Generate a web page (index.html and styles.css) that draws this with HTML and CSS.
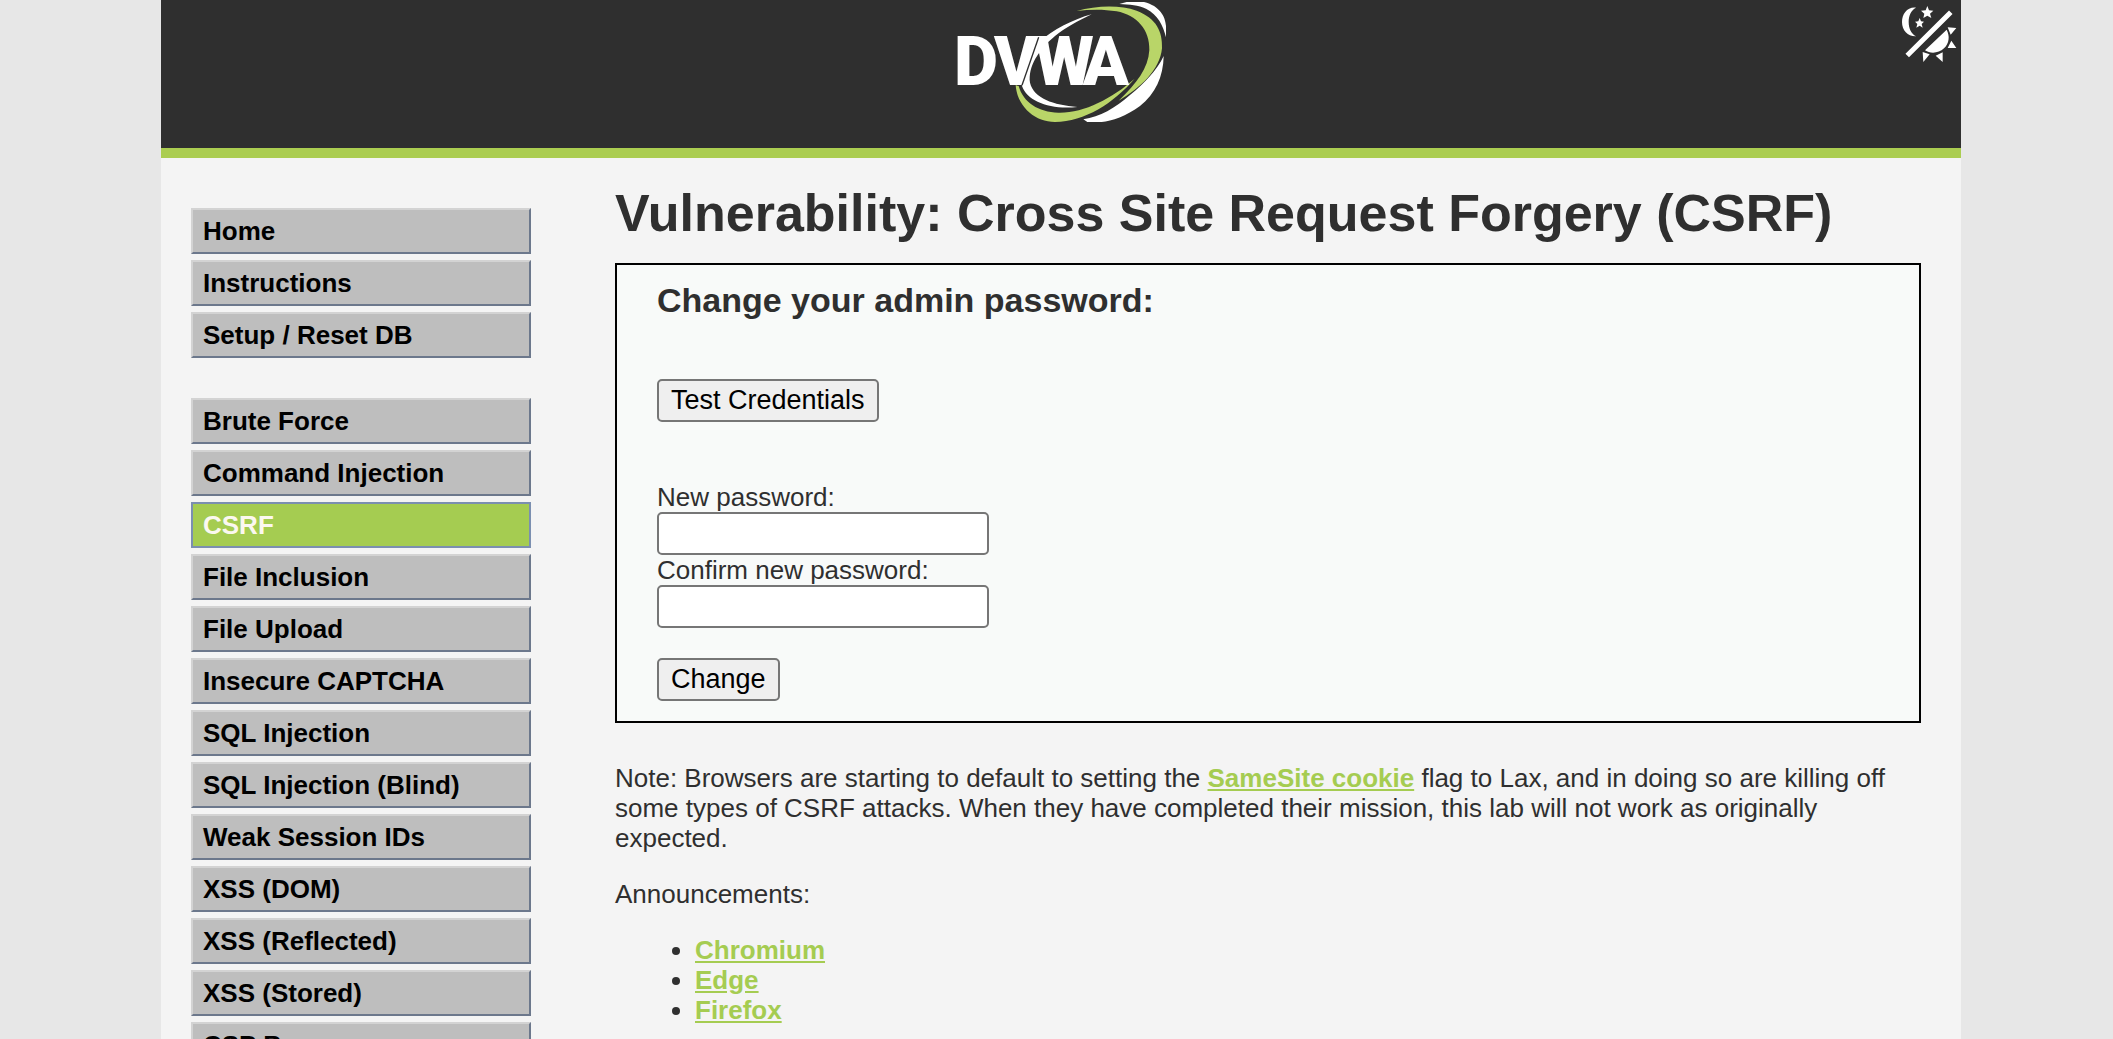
FILE: index.html
```html
<!DOCTYPE html>
<html lang="en">
<head>
    <meta charset="UTF-8">
    <meta name="viewport" content="width=device-width, initial-scale=1.0">
    <title>Vulnerability: Cross Site Request Forgery (CSRF)</title>
    <link rel="stylesheet" href="styles.css">
</head>
<body>
    <div class="container">
        <header class="header">
            <svg class="logo" viewBox="78 6 630 360" role="img" aria-label="DVWA">
                <g fill="#fff">
                    <path d="M568 12 L590 6 L642 6 C690 18 706 50 708 78 L708 112 C700 78 684 44 648 26 C625 16 600 13 568 12Z"/>
                    <path d="M701 168 C700 230 676 282 630 318 C590 348 545 364 515 366 L472 366 L460 358 C510 350 555 325 600 285 C645 248 680 212 701 168Z"/>
                    <path d="M485 43 C430 58 370 88 325 128 C290 162 268 212 276 258 C292 304 360 330 442 321 C370 314 312 296 300 248 C294 200 325 150 375 108 C405 84 445 62 485 43Z"/>
                </g>
                <g fill="#b9d568">
                    <path d="M440 33 C500 16 570 14 620 32 C680 55 698 95 696 145 C690 210 630 265 566 302 C620 250 655 205 658 150 C660 90 620 45 560 34 C520 27 480 28 440 33Z"/>
                    <path d="M257 256 C262 320 315 366 375 366 C465 364 550 310 614 236 C545 296 460 340 385 338 C325 336 280 308 266 258Z"/>
                </g>
                <text class="logo-text" x="72 192 314 458" y="256">DVWA</text>
                <path d="M326 112 L276 256" stroke="#2f2f2f" stroke-width="4"/>
            </svg>
            <button class="theme-button" type="button" aria-label="Toggle theme">
                <svg class="theme-icon" viewBox="93 3 180 186" fill="#fff">
                    <path d="M138 23 C112 20 96 42 96 66 C96 92 114 110 138 109 C123 101 116 84 116 66 C116 47 123 31 138 23Z"/>
                    <path d="M172 18 L177 31 L190 32 L180 41 L184 54 L172 47 L160 54 L163 41 L153 32 L167 31Z"/>
                    <path d="M149 54 L153 64 L162 65 L155 72 L158 83 L149 77 L139 83 L142 72 L135 65 L145 64Z"/>
                    <path d="M117 161 L237 42" stroke="#fff" stroke-width="15" stroke-linecap="square"/>
                    <path d="M230 89 C240 108 238 130 222 145 C206 160 182 162 165 151Z"/>
                    <path d="M233 82 L259 84 L242 104Z M244 122 L259 144 L233 144Z M158 156 L179 163 L160 186Z M218 157 L218 186 L197 167Z"/>
                </svg>
            </button>
        </header>

        <div class="page">
            <nav class="menu">
                <ul class="menu-block">
                    <li><a href="#">Home</a></li>
                    <li><a href="#">Instructions</a></li>
                    <li><a href="#">Setup / Reset DB</a></li>
                </ul>
                <ul class="menu-block">
                    <li><a href="#">Brute Force</a></li>
                    <li><a href="#">Command Injection</a></li>
                    <li><a class="selected" href="#">CSRF</a></li>
                    <li><a href="#">File Inclusion</a></li>
                    <li><a href="#">File Upload</a></li>
                    <li><a href="#">Insecure CAPTCHA</a></li>
                    <li><a href="#">SQL Injection</a></li>
                    <li><a href="#">SQL Injection (Blind)</a></li>
                    <li><a href="#">Weak Session IDs</a></li>
                    <li><a href="#">XSS (DOM)</a></li>
                    <li><a href="#">XSS (Reflected)</a></li>
                    <li><a href="#">XSS (Stored)</a></li>
                    <li><a href="#">CSP Bypass</a></li>
                </ul>
            </nav>

            <main class="content">
                <h1>Vulnerability: Cross Site Request Forgery (CSRF)</h1>

                <div class="vulnerable-area">
                    <h3>Change your admin password:</h3>
                    <button class="button" type="button">Test Credentials</button>
                    <form class="password-form">
                        <label for="password_new">New password:</label>
                        <input type="password" id="password_new" name="password_new" autocomplete="off">
                        <label for="password_conf">Confirm new password:</label>
                        <input type="password" id="password_conf" name="password_conf" autocomplete="off">
                        <button class="button change" type="submit">Change</button>
                    </form>
                </div>

                <p>Note: Browsers are starting to default to setting the <a href="#">SameSite cookie</a> flag to Lax, and in doing so are killing off some types of CSRF attacks. When they have completed their mission, this lab will not work as originally expected.</p>
                <p>Announcements:</p>
                <ul class="links">
                    <li><a href="#">Chromium</a></li>
                    <li><a href="#">Edge</a></li>
                    <li><a href="#">Firefox</a></li>
                </ul>
            </main>
        </div>
    </div>
</body>
</html>
```
FILE: styles.css
```css
body {
    margin: 0;
    padding-left: 9px;
    background-color: #e7e7e7;
    color: #2f2f2f;
    font: 26px/30px Arial, "Liberation Sans", sans-serif;
}
.container {
    max-width: 1800px;
    min-height: 100vh;
    margin: 0 auto;
    background-color: #f4f4f4;
}

/* header */
.header {
    display: grid;
    grid-template-columns: 1fr auto 1fr;
    align-items: start;
    padding-bottom: 26px;
    background-color: #2f2f2f;
    border-bottom: 10px solid #abcd51;
}
.logo {
    grid-column: 2;
    display: block;
    width: 210px;
    height: 120px;
    margin-top: 2px;
}
.logo-text {
    font-family: Roboto, sans-serif;
    font-size: 204px;
    font-weight: 900;
    fill: #fff;
}
.theme-button {
    justify-self: end;
    margin-top: 1px;
    padding: 0;
    border: 0;
    background: none;
}
.theme-icon {
    display: block;
    width: 60px;
    height: 62px;
}

/* columns */
.page {
    display: flex;
    gap: 84px;
    padding: 0 40px 0 30px;
}
.menu {
    flex: 0 0 340px;
    padding-top: 50px;
}
.menu-block {
    display: flex;
    flex-direction: column;
    gap: 6px;
    margin: 0 0 40px;
    padding: 0;
    list-style: none;
}
.menu-block a {
    display: block;
    padding: 6px 10px;
    border: 2px solid;
    border-color: #d3d3d3 #6c788c #6c788c #d3d3d3;
    background-color: #bebebe;
    color: #000;
    font-weight: bold;
    text-decoration: none;
}
.menu-block a.selected {
    border-color: #7b8fb0;
    background-color: #a5cc51;
    color: #fbf8f0;
}

.content {
    flex: 1;
    min-width: 0;
}
h1 {
    margin: 25px 0 20px;
    font-size: 52px;
    line-height: 60px;
}
h3 {
    margin: 0 0 60px;
    font-size: 34px;
    line-height: 38px;
}
p {
    margin: 0 0 26px;
}
.content a {
    color: #a5cc51;
    font-weight: bold;
}
.vulnerable-area {
    margin-bottom: 40px;
    padding: 16px 40px 20px;
    border: 2px solid #000;
    background-color: #f8faf9;
}
.button {
    display: block;
    height: 43px;
    padding: 0 12px 2px;
    border: 2px solid #767676;
    border-radius: 5px;
    background-color: #efefef;
    color: #000;
    font: inherit;
    font-size: 27px;
}
.password-form {
    display: flex;
    flex-direction: column;
    align-items: flex-start;
    margin-top: 60px;
}
.password-form input {
    box-sizing: border-box;
    width: 332px;
    height: 43px;
    border: 2px solid #767676;
    border-radius: 5px;
    background-color: #fff;
    font: inherit;
}
.change {
    margin-top: 30px;
}
.links {
    margin: 0;
    padding-left: 80px;
}
```
